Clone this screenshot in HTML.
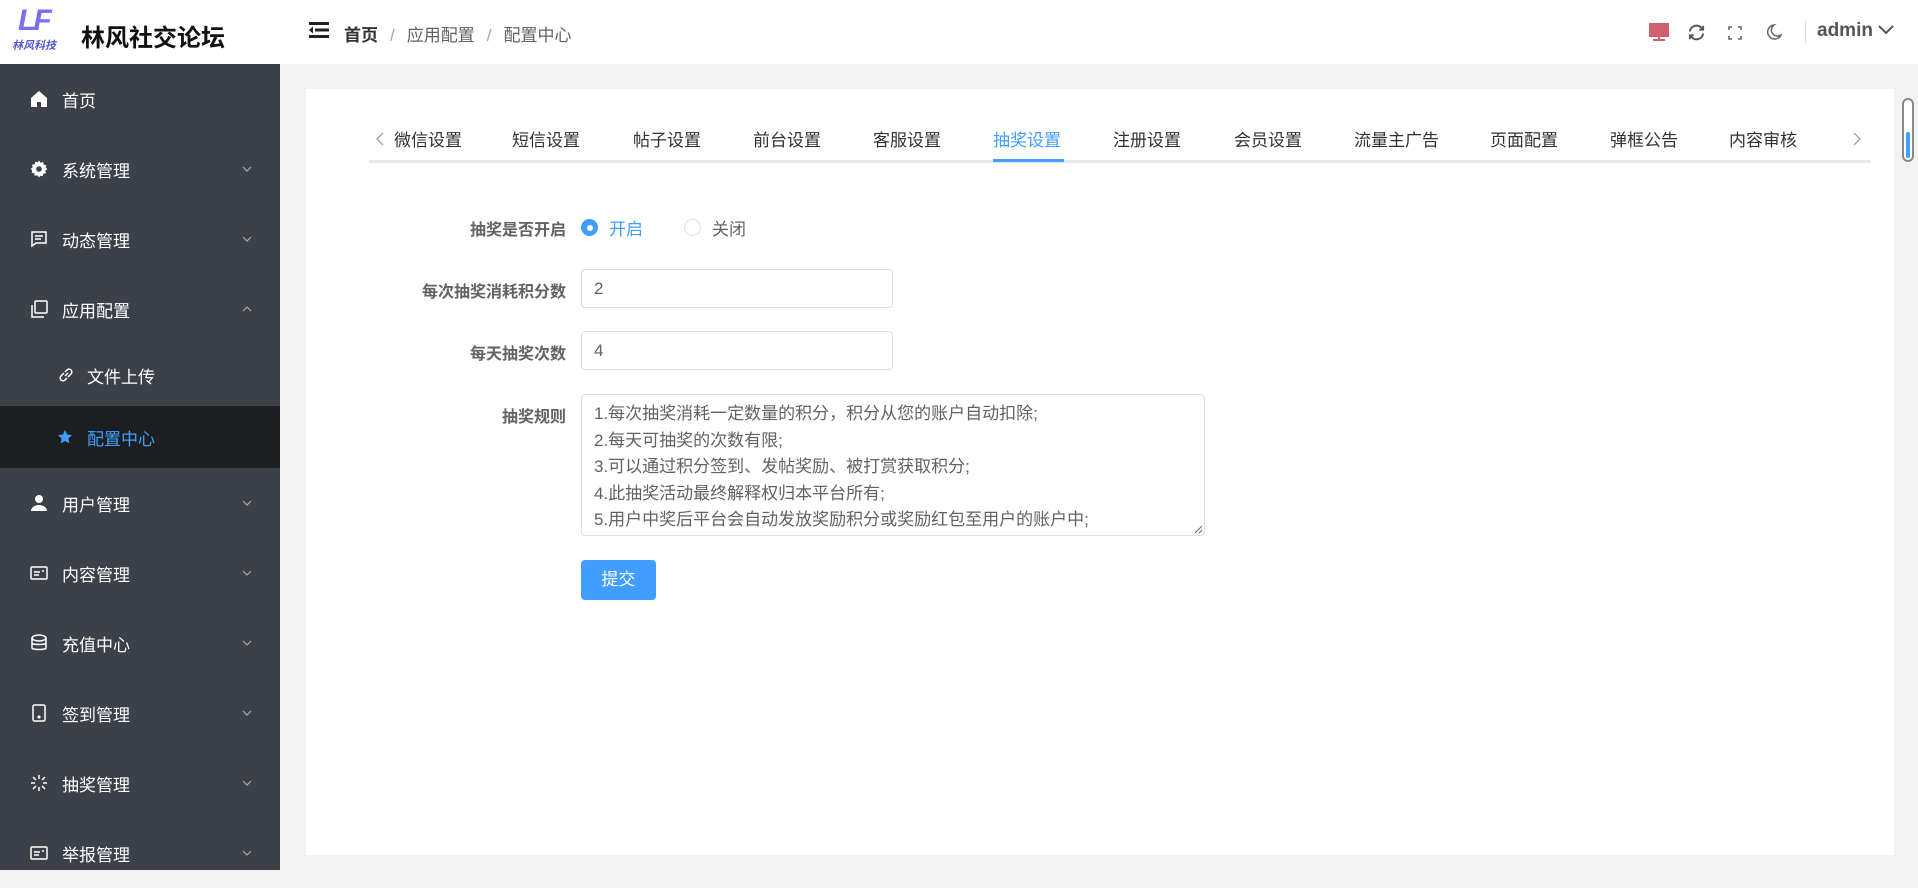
<!DOCTYPE html>
<html style="width:1918px;height:870px"><head><meta charset="utf-8"><style>
*{margin:0;padding:0;box-sizing:border-box}
body{width:1918px;height:870px;overflow:hidden;font-family:"Liberation Sans","Noto Sans CJK SC",sans-serif;background:#f3f3f3;position:relative;color:#606266}
.hdr{position:absolute;left:0;top:0;width:1918px;height:64px;background:#fff}
.side{position:absolute;left:0;top:64px;bottom:0;width:280px;background:#3c4049}
.mi{position:absolute;left:0;width:280px;color:#fff;font-size:17px;display:flex;align-items:center}
.mi .ic{position:absolute;left:30px;width:18px;height:18px}
.mi .t{position:absolute;left:62px}
.mi .ar{position:absolute;left:241px;width:12px;height:12px}
.card{position:absolute;left:306px;top:89px;width:1588px;height:766px;background:#fff}
.tab{position:absolute;top:126px;font-size:17px;color:#303133}
.lbl{position:absolute;right:1352px;font-size:16px;font-weight:bold;color:#606266}
.inp{position:absolute;left:581px;border:1px solid #dcdfe6;border-radius:4px;background:#fff;font-size:17px;color:#606266;padding-left:12px}
</style></head><body>
<div class="hdr">
  <div style="position:absolute;left:18px;top:4px;font-size:30px;font-weight:bold;font-style:italic;color:#7b6cf0;letter-spacing:-3px">LF</div>
  <div style="position:absolute;left:12px;top:37px;font-size:11px;font-weight:bold;color:#5a57d6;font-style:italic">林风科技</div>
  <div style="position:absolute;left:81px;top:18px;font-size:24px;font-weight:bold;color:#111">林风社交论坛</div>
  <svg style="position:absolute;left:309px;top:22px" width="20" height="16" viewBox="0 0 20 16"><rect x="0" y="0" width="20" height="3" fill="#222"/><rect x="6" y="6.5" width="14" height="3" fill="#222"/><rect x="0" y="13" width="20" height="3" fill="#222"/><path d="M4 4.5 L0 8 L4 11.5Z" fill="#222"/></svg>
  <div style="position:absolute;left:344px;top:21px;font-size:17px;color:#606266"><b style="color:#303133">首页</b><span style="margin:0 12px;color:#97a8be">/</span>应用配置<span style="margin:0 12px;color:#97a8be">/</span>配置中心</div>
  <svg style="position:absolute;left:1649px;top:23px" width="20" height="19"><rect x="0" y="0" width="20" height="14" fill="#d06070"/><rect x="9" y="14" width="2" height="3" fill="#d06070"/><rect x="4" y="16" width="12" height="2" fill="#d06070"/></svg>
  <svg style="position:absolute;left:1687px;top:23px" width="19" height="19" viewBox="0 0 20 20" fill="none" stroke="#555" stroke-width="2"><path d="M3 9a7 7 0 0 1 12-4l2 2M17 11a7 7 0 0 1-12 4l-2-2"/><path d="M17 3v4h-4M3 17v-4h4"/></svg>
  <svg style="position:absolute;left:1728px;top:26px" width="14" height="14" fill="none" stroke="#666" stroke-width="1.6"><path d="M1 4V1h3M10 1h3v3M13 10v3h-3M4 13H1v-3"/></svg>
  <svg style="position:absolute;left:1766px;top:24px" width="16" height="17" fill="none" stroke="#666" stroke-width="1.5"><path d="M8 1a7 7 0 1 0 7 10A6 6 0 0 1 8 1z"/></svg>
  <div style="position:absolute;left:1805px;top:20px;width:1px;height:24px;background:#ddd"></div>
  <div style="position:absolute;left:1817px;top:20px;font-size:19px;font-weight:bold;color:#555">admin</div>
  <svg style="position:absolute;left:1878px;top:25px" width="16" height="10" fill="none" stroke="#555" stroke-width="2"><path d="M1 1l7 7 7-7"/></svg>
</div>
<div class="side">
  <div class="mi" style="top:0;height:70px"><svg class="ic" viewBox="0 0 18 18"><path d="M9 1L1 8v9h6v-5h4v5h6V8z" fill="#fff"/></svg><span class="t">首页</span></div>
  <div class="mi" style="top:70px;height:70px"><svg class="ic" viewBox="0 0 18 18"><path d="M9 0.5l1.6 2.2 2.6-.6.5 2.6 2.6.6-.6 2.6L17.5 9l-2.2 1.6.6 2.6-2.6.5-.6 2.6-2.6-.6L9 17.5l-1.6-2.2-2.6.6-.5-2.6-2.6-.6.6-2.6L.5 9l2.2-1.6-.6-2.6 2.6-.5.6-2.6 2.6.6z" fill="#fff"/><circle cx="9" cy="9" r="2.8" fill="#3c4049"/></svg><span class="t">系统管理</span><svg class="ar" viewBox="0 0 12 12" fill="none" stroke="#aaa" stroke-width="1.2"><path d="M2 4l4 4 4-4"/></svg></div>
  <div class="mi" style="top:140px;height:70px"><svg class="ic" viewBox="0 0 18 18" fill="none" stroke="#fff" stroke-width="1.5"><path d="M2 2h14v11H6l-4 3z"/><path d="M5 6h8M5 9h6"/></svg><span class="t">动态管理</span><svg class="ar" viewBox="0 0 12 12" fill="none" stroke="#aaa" stroke-width="1.2"><path d="M2 4l4 4 4-4"/></svg></div>
  <div class="mi" style="top:210px;height:70px"><svg class="ic" viewBox="0 0 18 18" fill="none" stroke="#fff" stroke-width="1.5"><rect x="5" y="1" width="12" height="12" rx="1"/><path d="M2 5v12h12"/></svg><span class="t">应用配置</span><svg class="ar" viewBox="0 0 12 12" fill="none" stroke="#aaa" stroke-width="1.2"><path d="M2 8l4-4 4 4"/></svg></div>
  <div class="mi" style="top:280px;height:62px"><svg class="ic" style="left:58px;width:16px" viewBox="0 0 16 16" fill="none" stroke="#fff" stroke-width="1.5"><path d="M7 9l3-3M6 6l-3 3a2.5 2.5 0 0 0 4 4l2-2M10 10l3-3a2.5 2.5 0 0 0-4-4L7 5"/></svg><span class="t" style="left:87px">文件上传</span></div>
  <div class="mi" style="top:342px;height:62px;background:#1d1e22"><svg class="ic" style="left:57px;width:16px" viewBox="0 0 16 16"><path d="M8 1l2.1 4.5 4.9.6-3.6 3.4.9 4.9L8 12l-4.3 2.4.9-4.9L1 6.1l4.9-.6z" fill="#409eff"/></svg><span class="t" style="left:87px;color:#409eff">配置中心</span></div>
  <div class="mi" style="top:404px;height:70px"><svg class="ic" viewBox="0 0 18 18" fill="#fff"><circle cx="9" cy="5" r="4"/><path d="M1 17a8 6 0 0 1 16 0z"/></svg><span class="t">用户管理</span><svg class="ar" viewBox="0 0 12 12" fill="none" stroke="#aaa" stroke-width="1.2"><path d="M2 4l4 4 4-4"/></svg></div>
  <div class="mi" style="top:474px;height:70px"><svg class="ic" viewBox="0 0 18 18" fill="none" stroke="#fff" stroke-width="1.5"><rect x="1" y="3" width="16" height="12" rx="1"/><path d="M4 8h6M4 11h5M12 7h2"/></svg><span class="t">内容管理</span><svg class="ar" viewBox="0 0 12 12" fill="none" stroke="#aaa" stroke-width="1.2"><path d="M2 4l4 4 4-4"/></svg></div>
  <div class="mi" style="top:544px;height:70px"><svg class="ic" viewBox="0 0 18 18" fill="none" stroke="#fff" stroke-width="1.5"><ellipse cx="9" cy="4" rx="7" ry="3"/><path d="M2 4v10c0 2 14 2 14 0V4M2 9c0 2 14 2 14 0"/></svg><span class="t">充值中心</span><svg class="ar" viewBox="0 0 12 12" fill="none" stroke="#aaa" stroke-width="1.2"><path d="M2 4l4 4 4-4"/></svg></div>
  <div class="mi" style="top:614px;height:70px"><svg class="ic" viewBox="0 0 18 18" fill="none" stroke="#fff" stroke-width="1.5"><rect x="3" y="1" width="12" height="16" rx="1.5"/><circle cx="9" cy="13" r=".8" fill="#fff"/></svg><span class="t">签到管理</span><svg class="ar" viewBox="0 0 12 12" fill="none" stroke="#aaa" stroke-width="1.2"><path d="M2 4l4 4 4-4"/></svg></div>
  <div class="mi" style="top:684px;height:70px"><svg class="ic" viewBox="0 0 18 18" fill="none" stroke="#fff" stroke-width="1.5"><path d="M9 1v4M9 13v4M1 9h4M13 9h4M3 3l3 3M12 12l3 3M15 3l-3 3M6 12l-3 3"/></svg><span class="t">抽奖管理</span><svg class="ar" viewBox="0 0 12 12" fill="none" stroke="#aaa" stroke-width="1.2"><path d="M2 4l4 4 4-4"/></svg></div>
  <div class="mi" style="top:754px;height:70px"><svg class="ic" viewBox="0 0 18 18" fill="none" stroke="#fff" stroke-width="1.5"><rect x="1" y="3" width="16" height="12" rx="1"/><path d="M4 8h6M4 11h5M12 7h2"/></svg><span class="t">举报管理</span><svg class="ar" viewBox="0 0 12 12" fill="none" stroke="#aaa" stroke-width="1.2"><path d="M2 4l4 4 4-4"/></svg></div>
</div>
<div class="card"></div>
<div style="position:absolute;left:1902px;top:98px;width:12px;height:64px;border:2px solid #888;border-radius:6px;background:#fff"></div>
<div style="position:absolute;left:1906px;top:132px;width:4px;height:26px;background:#409eff;border-radius:2px"></div>
<div style="position:absolute;left:369px;top:160px;width:1501px;height:3px;background:#e4e7ed"></div>
<div style="position:absolute;left:993px;top:159px;width:71px;height:3px;background:#409eff"></div>
<svg style="position:absolute;left:376px;top:132px" width="8" height="14" fill="none" stroke="#999" stroke-width="1.2"><path d="M7 1L1 7l6 6"/></svg>
<svg style="position:absolute;left:1853px;top:132px" width="8" height="14" fill="none" stroke="#999" stroke-width="1.2"><path d="M1 1l6 6-6 6"/></svg>
<div class="tab" style="left:394px">微信设置</div>
<div class="tab" style="left:512px">短信设置</div>
<div class="tab" style="left:633px">帖子设置</div>
<div class="tab" style="left:753px">前台设置</div>
<div class="tab" style="left:873px">客服设置</div>
<div class="tab" style="left:993px;color:#409eff">抽奖设置</div>
<div class="tab" style="left:1113px">注册设置</div>
<div class="tab" style="left:1234px">会员设置</div>
<div class="tab" style="left:1354px">流量主广告</div>
<div class="tab" style="left:1490px">页面配置</div>
<div class="tab" style="left:1610px">弹框公告</div>
<div class="tab" style="left:1729px">内容审核</div>

<div class="lbl" style="top:216px">抽奖是否开启</div>
<div style="position:absolute;left:581px;top:219px;width:17px;height:17px;border-radius:50%;background:#409eff"><div style="position:absolute;left:5.5px;top:5.5px;width:6px;height:6px;border-radius:50%;background:#fff"></div></div>
<div style="position:absolute;left:609px;top:215px;font-size:17px;color:#409eff">开启</div>
<div style="position:absolute;left:684px;top:219px;width:17px;height:17px;border-radius:50%;border:1px solid #dcdfe6"></div>
<div style="position:absolute;left:712px;top:215px;font-size:17px;color:#606266">关闭</div>

<div class="lbl" style="top:278px">每次抽奖消耗积分数</div>
<div class="inp" style="top:269px;width:312px;height:39px;line-height:37px">2</div>
<div class="lbl" style="top:340px">每天抽奖次数</div>
<div class="inp" style="top:331px;width:312px;height:39px;line-height:37px">4</div>
<div class="lbl" style="top:403px">抽奖规则</div>
<div class="inp" style="top:394px;width:624px;height:142px;padding-top:6px;line-height:26.5px;font-size:17px">1.每次抽奖消耗一定数量的积分，积分从您的账户自动扣除;<br>2.每天可抽奖的次数有限;<br>3.可以通过积分签到、发帖奖励、被打赏获取积分;<br>4.此抽奖活动最终解释权归本平台所有;<br>5.用户中奖后平台会自动发放奖励积分或奖励红包至用户的账户中;</div>
<svg style="position:absolute;left:1194px;top:525px" width="9" height="9" stroke="#666"><path d="M1 8l7-7M5 8l3-3"/></svg>
<div style="position:absolute;left:581px;top:560px;width:75px;height:40px;background:#409eff;border-radius:4px;color:#fff;font-size:17px;text-align:center;line-height:40px">提交</div>
</body></html>
